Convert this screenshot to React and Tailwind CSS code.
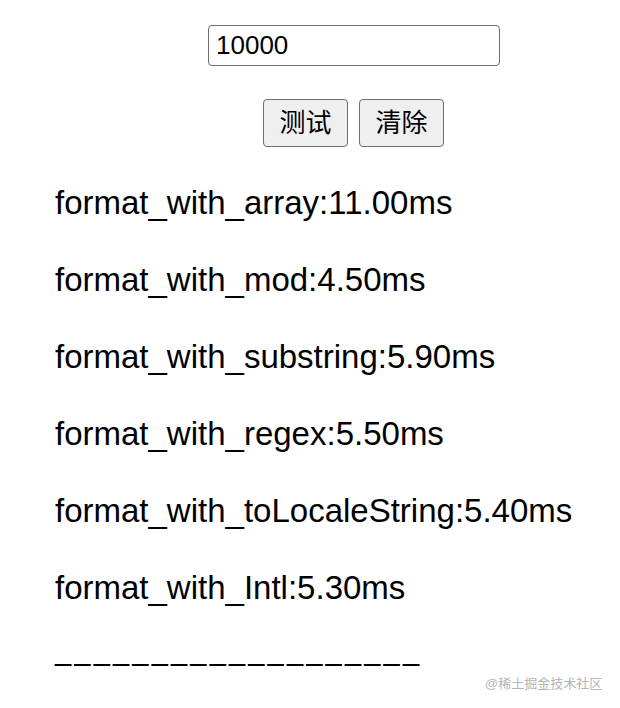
import React, { useState } from 'react';

const results = [
  { name: 'format_with_array', ms: '11.00' },
  { name: 'format_with_mod', ms: '4.50' },
  { name: 'format_with_substring', ms: '5.90' },
  { name: 'format_with_regex', ms: '5.50' },
  { name: 'format_with_toLocaleString', ms: '5.40' },
  { name: 'format_with_Intl', ms: '5.30' },
];

function App() {
  const [value, setValue] = useState('10000');

  return (
    <div
      className="relative w-[620px] h-[708px] overflow-hidden bg-white text-black"
      style={{ fontFamily: '"Liberation Sans", "Noto Sans CJK SC", sans-serif' }}
    >
      <div className="flex flex-col items-start pt-[25px]">
        <input
          value={value}
          onChange={(e) => setValue(e.target.value)}
          className="ml-[208px] w-[292px] h-[41px] px-[7px] border-[1.5px] border-[#6f6f6f] rounded-[4px] text-[26px] outline-none"
        />

        {/* buttons */}
        <div className="ml-[263px] mt-[33px] flex gap-[11px]">
          <button className="w-[85px] h-[48px] bg-[#efefef] border-[1.5px] border-[#6f6f6f] rounded-[4px] text-[26px]">
            测试
          </button>
          <button className="w-[85px] h-[48px] bg-[#efefef] border-[1.5px] border-[#6f6f6f] rounded-[4px] text-[26px]">
            清除
          </button>
        </div>

        {/* results */}
        <div className="mt-[33px] pl-[55px] flex flex-col gap-[32px] text-[33px]">
          {results.map((r) => (
            <p key={r.name} className="h-[45px] leading-[45px] whitespace-nowrap">
              {r.name}:{r.ms}ms
            </p>
          ))}
          <p className="-mt-[14px] h-[45px] leading-[45px] text-[29px] tracking-[3.2px] whitespace-nowrap">
            ___________________
          </p>
        </div>
      </div>

      <div className="absolute left-[485px] top-[674px] text-[13px] text-[#b5b5b5]">
        @稀土掘金技术社区
      </div>
    </div>
  );
}

export default App;
